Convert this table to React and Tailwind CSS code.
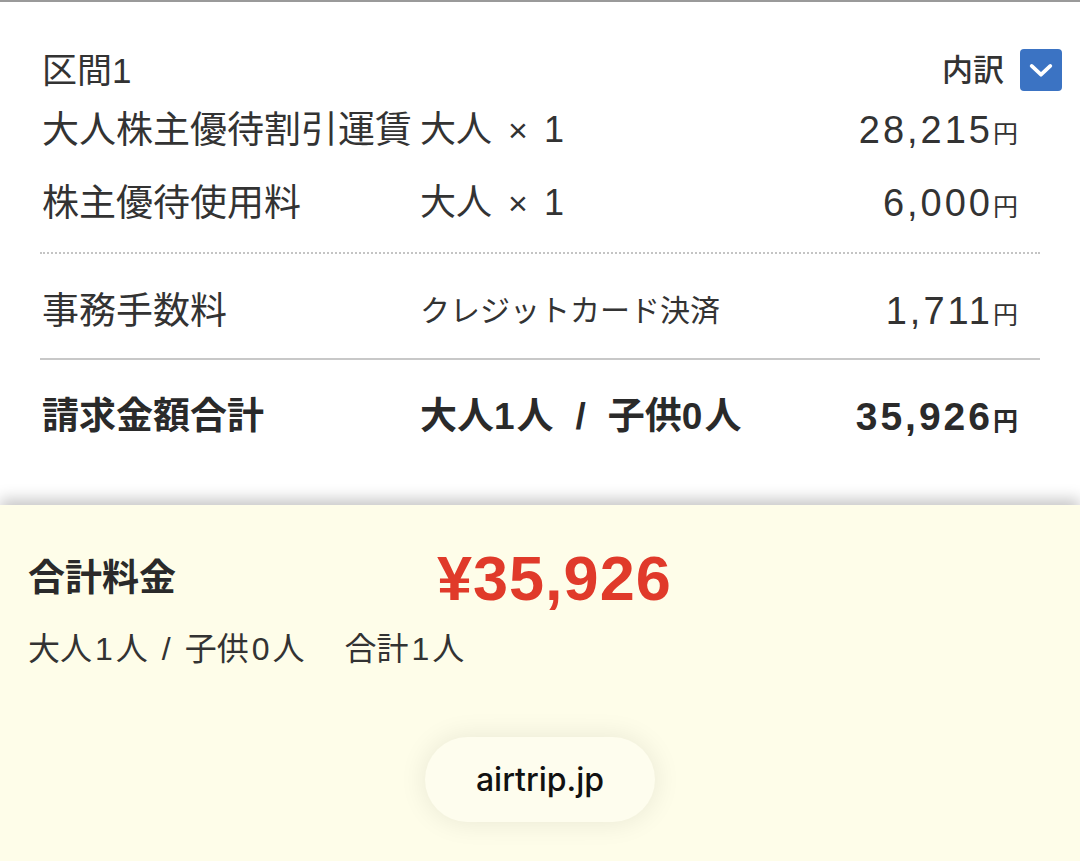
const FONT = "font-['Liberation_Sans','Noto_Sans_CJK_JP',sans-serif]"

const ROWS = [
  { label: '大人株主優待割引運賃', price: '28,215', h: 'h-[72px]' },
  { label: '株主優待使用料', price: '6,000', h: 'h-[74px]' },
]

function Yen({ value, bold }) {
  return (
    <span className="whitespace-nowrap">
      <span className={bold ? 'text-[39px] font-bold tracking-[3px]' : 'text-[38px] tracking-[3px]'}>{value}</span>
      <span className={bold ? 'text-[25px] font-bold' : 'text-[25px]'}>円</span>
    </span>
  )
}

export default function App() {
  return (
    <div className={`w-[1080px] h-[861px] flex flex-col bg-white text-[#333] overflow-hidden ${FONT}`}>
      {/* ── cut-off bar at top ── */}
      <div className="h-[2px] shrink-0 bg-[#9a9a9a]" />

      {/* ── Breakdown ── */}
      <div className="flex flex-col px-[40px] pt-[44px] h-[503px] shrink-0">
        <div className="flex items-center justify-between h-[48px] -mr-[22px] pl-[2px]">
          <span className="text-[35px] leading-none">区間<span className="tracking-[-2px]">1</span></span>
          <div className="flex items-center gap-[16px]">
            <span className="text-[31px] font-medium leading-none">内訳</span>
            <div className="w-[42px] h-[42px] rounded-[4px] bg-[#3b73c3] flex items-center justify-center">
              <svg width="28" height="28" viewBox="0 0 24 24" fill="none" stroke="white" strokeWidth="3.2" strokeLinecap="round" strokeLinejoin="round">
                <path d="M4 8.5l8 7.5 8-7.5" />
              </svg>
            </div>
          </div>
        </div>

        {ROWS.map(r => (
          <div key={r.label} className={`flex items-center pl-[2px] pr-[22px] ${r.h}`}>
            <span className="w-[378px] shrink-0 whitespace-nowrap text-[37px] leading-none">{r.label}</span>
            <span className="text-[36px] leading-none whitespace-nowrap">大人<span className="text-[34px] px-[16px]">×</span>1</span>
            <span className="flex-1 text-right leading-none"><Yen value={r.price} /></span>
          </div>
        ))}

        <div className="mt-[12px] border-t-2 border-dotted border-[#c4c4c4]" />

        <div className="flex items-center pl-[2px] pr-[22px] mt-[10px] h-[94px]">
          <span className="w-[378px] shrink-0 text-[37px] leading-none">事務手数料</span>
          <span className="text-[30px] leading-none whitespace-nowrap">クレジットカード決済</span>
          <span className="flex-1 text-right leading-none"><Yen value="1,711" /></span>
        </div>

        <div className="border-t-2 border-[#c8c8c8]" />

        <div className="flex items-center pl-[2px] pr-[22px] h-[112px] text-[#2a2a2a]">
          <span className="w-[378px] shrink-0 text-[37px] font-bold leading-none">請求金額合計</span>
          <span className="text-[37px] font-bold leading-none whitespace-nowrap">大人<span className="tracking-[2px]">1</span>人<span className="px-[22px]">/</span>子供<span className="tracking-[2px]">0</span>人</span>
          <span className="flex-1 text-right leading-none"><Yen value="35,926" bold /></span>
        </div>
      </div>

      {/* ── Total panel ── */}
      <div className="relative flex-1 flex flex-col bg-[#fefde9] px-[28px] pt-[40px] shadow-[0_-6px_14px_rgba(0,0,0,0.22)]">
        <div className="flex items-center h-[66px]">
          <span className="w-[409px] shrink-0 text-[37px] font-bold text-[#2a2a2a] leading-none">合計料金</span>
          <span className="text-[63px] font-bold text-[#e03a2a] leading-none tracking-[1px]">¥35,926</span>
        </div>
        <div className="flex items-center h-[52px] mt-[12px] text-[32px] text-[#333] leading-none whitespace-nowrap">
          大人<span className="px-[3px]">1</span>人<span className="px-[14px]">/</span>子供<span className="px-[3px]">0</span>人<span className="w-[40px]" />合計<span className="px-[3px]">1</span>人
        </div>
        <div className="flex justify-center mt-[62px]">
          <div className="w-[230px] h-[85px] rounded-full bg-[#fefdee] flex items-center justify-center shadow-[0_0_28px_rgba(0,0,0,0.09)]">
            <span className="text-[32px] font-medium text-[#111] font-['Inter','Liberation_Sans',sans-serif]">airtrip.jp</span>
          </div>
        </div>
      </div>
    </div>
  )
}
